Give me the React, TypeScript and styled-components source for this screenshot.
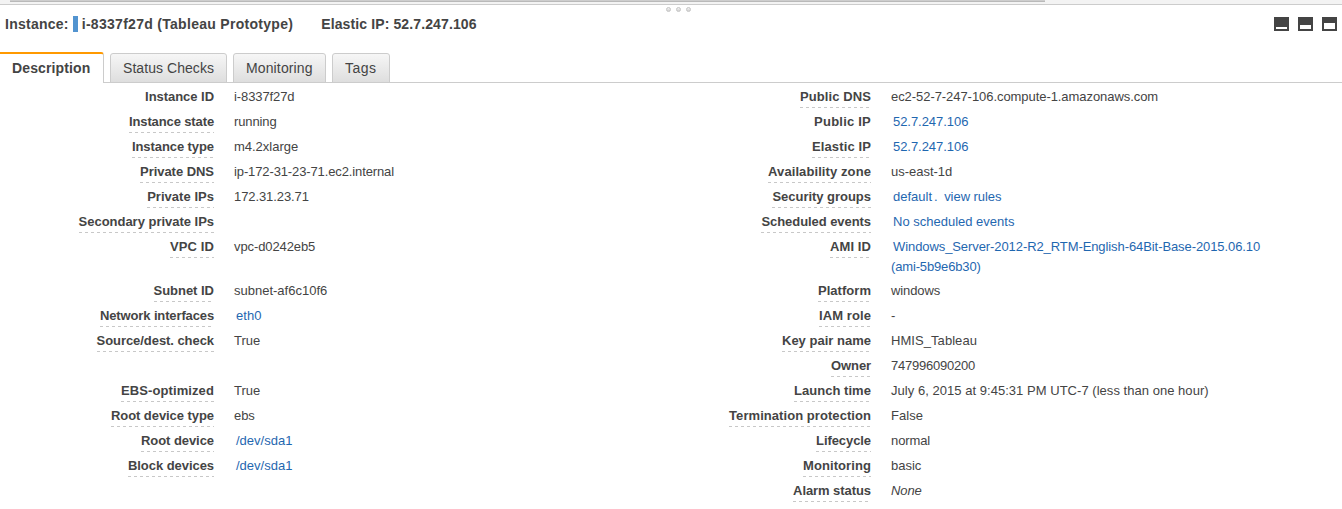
import React from "react";
import styled, { createGlobalStyle, css } from "styled-components";

const GlobalStyle = createGlobalStyle`
  * { box-sizing: border-box; }
  body {
    margin: 0;
    background: #fff;
    color: #444;
    font: 13px/20px "Liberation Sans", Arial, sans-serif;
    overflow: hidden;
  }
`;

const Panel = styled.main`
  height: 509px;
  display: flex;
  flex-direction: column;
`;

const Splitter = styled.div`
  height: 5px;
  flex: none;
  background: #f3f3f3;
  border-bottom: 1px solid #ccc;
  padding-left: 10px;
`;

const ScrollThumb = styled.div`
  width: 1035px;
  height: 2px;
  background: #cdcdcd;
  border-bottom: 1px solid #b9b9b9;
`;

const Grip = styled.div`
  height: 7px;
  flex: none;
  display: flex;
  justify-content: center;
  align-items: flex-end;
  gap: 5px;
  padding-left: 15px;
`;

const GripDot = styled.i`
  width: 5px;
  height: 5px;
  border-radius: 50%;
  border: 1px solid #c4c4c4;
  background: linear-gradient(#f4f4f4, #d0d0d0);
`;

const Text = styled.span<{ $track?: number }>`
  white-space: nowrap;
  letter-spacing: ${(p) => p.$track ?? 0}px;
`;

const Header = styled.header`
  height: 40px;
  flex: none;
  display: flex;
  align-items: flex-start;
  padding: 2px 5px 0;
  font-size: 14px;
  font-weight: bold;
`;

const StateBar = styled.i`
  width: 5px;
  height: 16px;
  margin: 2px 4px 0;
  background: #5294d0;
`;

const ElasticIp = styled.div`
  margin-left: 28px;
`;

const LayoutButtons = styled.div`
  display: flex;
  gap: 9px;
  margin: 3px 0 0 auto;
`;

const LayoutButton = styled.button<{ $pane: number }>`
  width: 15px;
  height: 14px;
  padding: 0;
  display: flex;
  align-items: flex-end;
  border: 2px solid #444;
  background: #444;

  &::after {
    content: "";
    width: 100%;
    height: ${(p) => p.$pane}px;
    background: #fff;
  }
`;

const TabBar = styled.nav`
  height: 31px;
  flex: none;
  display: flex;
  align-items: flex-end;
  gap: 6px;
  box-shadow: inset 0 -1px #ccc;
`;

const Tab = styled.a<{ $width: number; $active?: boolean }>`
  width: ${(p) => p.$width}px;
  height: 30px;
  padding-left: 12px;
  border: 1px solid #ccc;
  border-radius: 3px 3px 0 0;
  background: linear-gradient(#f6f6f6, #dedede);
  font-size: 14px;
  line-height: 29px;
  ${(p) =>
    p.$active &&
    css`
      height: 31px;
      border-width: 2px 1px 0 0;
      border-top-color: #ff9900;
      border-radius: 0 3px 0 0;
      background: #fff;
      font-weight: bold;
    `}
`;

const Details = styled.section`
  padding-top: 2px;
`;

const Row = styled.div`
  display: grid;
  grid-template-columns: 214px 403px 214px 400px;
  column-gap: 20px;
  min-height: 25px;
  padding: 2px 0;
`;

const LabelCell = styled.div`
  display: flex;
  justify-content: flex-end;
  align-items: flex-start;
  font-weight: bold;
`;

const Label = styled(Text)<{ $plain?: boolean }>`
  height: 21px;
  ${(p) =>
    !p.$plain &&
    css`
      background: repeating-linear-gradient(90deg, #c8c8c8 0 3px, transparent 3px 6px) left bottom / 100% 1px
        no-repeat;
    `}
`;

const Value = styled.div``;

const Link = styled(Text).attrs({ as: "a" })<{ $flush?: boolean }>`
  color: #1f67b0;
  margin-left: ${(p) => (p.$flush ? 0 : 2)}px;
`;

const Separator = styled.span`
  color: #1f67b0;
  margin: 0 4.5px 0 2px;
`;

type Field = {
  label: string;
  track?: number;
  plain?: boolean;
  value?: React.ReactNode;
};

const text = (value: string, track = 0) => <Text $track={track}>{value}</Text>;
const link = (value: string, track = 0) => <Link $track={track}>{value}</Link>;

const rows: [Field | null, Field][] = [
  [
    { label: "Instance ID", track: -0.04, plain: true, value: text("i-8337f27d", -0.1) },
    { label: "Public DNS", track: 0.09, value: text("ec2-52-7-247-106.compute-1.amazonaws.com", -0.06) },
  ],
  [
    { label: "Instance state", track: -0.12, value: text("running", -0.12) },
    { label: "Public IP", track: 0.22, plain: true, value: link("52.7.247.106", -0.05) },
  ],
  [
    { label: "Instance type", track: -0.08, value: text("m4.2xlarge", -0.02) },
    { label: "Elastic IP", track: 0.12, value: link("52.7.247.106", -0.05) },
  ],
  [
    { label: "Private DNS", track: -0.04, value: text("ip-172-31-23-71.ec2.internal", -0.12) },
    { label: "Availability zone", track: 0.09, value: text("us-east-1d", -0.02) },
  ],
  [
    { label: "Private IPs", track: 0.03, value: text("172.31.23.71", -0.09) },
    {
      label: "Security groups",
      track: -0.03,
      value: (
        <>
          {link("default")}
          <Separator>.</Separator>
          {link("view rules", -0.05)}
        </>
      ),
    },
  ],
  [
    { label: "Secondary private IPs", track: -0.02 },
    { label: "Scheduled events", track: -0.06, value: link("No scheduled events") },
  ],
  [
    { label: "VPC ID", track: 0.12, value: text("vpc-d0242eb5", -0.1) },
    {
      label: "AMI ID",
      track: 0.08,
      value: (
        <>
          {link("Windows_Server-2012-R2_RTM-English-64Bit-Base-2015.06.10", -0.085)}
          <br />
          <Link $flush $track={-0.15}>(ami-5b9e6b30)</Link>
        </>
      ),
    },
  ],
  [
    { label: "Subnet ID", track: -0.02, value: text("subnet-af6c10f6") },
    { label: "Platform", track: 0.04, value: text("windows", -0.1) },
  ],
  [
    { label: "Network interfaces", track: -0.13, value: link("eth0", 0.08) },
    { label: "IAM role", track: 0.09, value: text("-") },
  ],
  [
    { label: "Source/dest. check", track: -0.06, value: text("True") },
    { label: "Key pair name", track: 0.01, value: text("HMIS_Tableau", 0.06) },
  ],
  [null, { label: "Owner", track: -0.1, value: text("747996090200", -0.23) }],
  [
    { label: "EBS-optimized", track: 0.1, value: text("True") },
    {
      label: "Launch time",
      track: 0.04,
      value: text("July 6, 2015 at 9:45:31 PM UTC-7 (less than one hour)", 0.035),
    },
  ],
  [
    { label: "Root device type", track: -0.06, value: text("ebs", -0.1) },
    { label: "Termination protection", track: 0.06, value: text("False", 0.05) },
  ],
  [
    { label: "Root device", track: -0.06, value: link("/dev/sda1") },
    { label: "Lifecycle", track: -0.08, value: text("normal", -0.1) },
  ],
  [
    { label: "Block devices", track: -0.05, value: link("/dev/sda1") },
    { label: "Monitoring", track: 0.08, value: text("basic") },
  ],
  [null, { label: "Alarm status", track: -0.07, value: <em>{text("None", -0.1)}</em> }],
];

function FieldCells({ field }: { field: Field | null }) {
  return (
    <>
      <LabelCell>
        {field && (
          <Label $track={field.track} $plain={field.plain}>
            {field.label}
          </Label>
        )}
      </LabelCell>
      <Value>{field?.value}</Value>
    </>
  );
}

export default function App() {
  return (
    <Panel>
      <GlobalStyle />
      <Splitter>
        <ScrollThumb />
      </Splitter>
      <Grip>
        <GripDot />
        <GripDot />
        <GripDot />
      </Grip>
      <Header>
        <Text $track={0.25}>Instance:</Text>
        <StateBar />
        <Text $track={0.29}>i-8337f27d (Tableau Prototype)</Text>
        <ElasticIp>
          <Text $track={0.12}>Elastic IP: 52.7.247.106</Text>
        </ElasticIp>
        <LayoutButtons>
          <LayoutButton $pane={2} aria-label="Collapse panel" />
          <LayoutButton $pane={4} aria-label="Half panel" />
          <LayoutButton $pane={6} aria-label="Full panel" />
        </LayoutButtons>
      </Header>
      <TabBar>
        <Tab $width={104} $active>
          <Text $track={0.12}>Description</Text>
        </Tab>
        <Tab $width={117}>
          <Text $track={0.06}>Status Checks</Text>
        </Tab>
        <Tab $width={93}>
          <Text $track={0.13}>Monitoring</Text>
        </Tab>
        <Tab $width={58}>
          <Text $track={0.5}>Tags</Text>
        </Tab>
      </TabBar>
      <Details>
        {rows.map(([left, right]) => (
          <Row key={right.label}>
            <FieldCells field={left} />
            <FieldCells field={right} />
          </Row>
        ))}
      </Details>
    </Panel>
  );
}
